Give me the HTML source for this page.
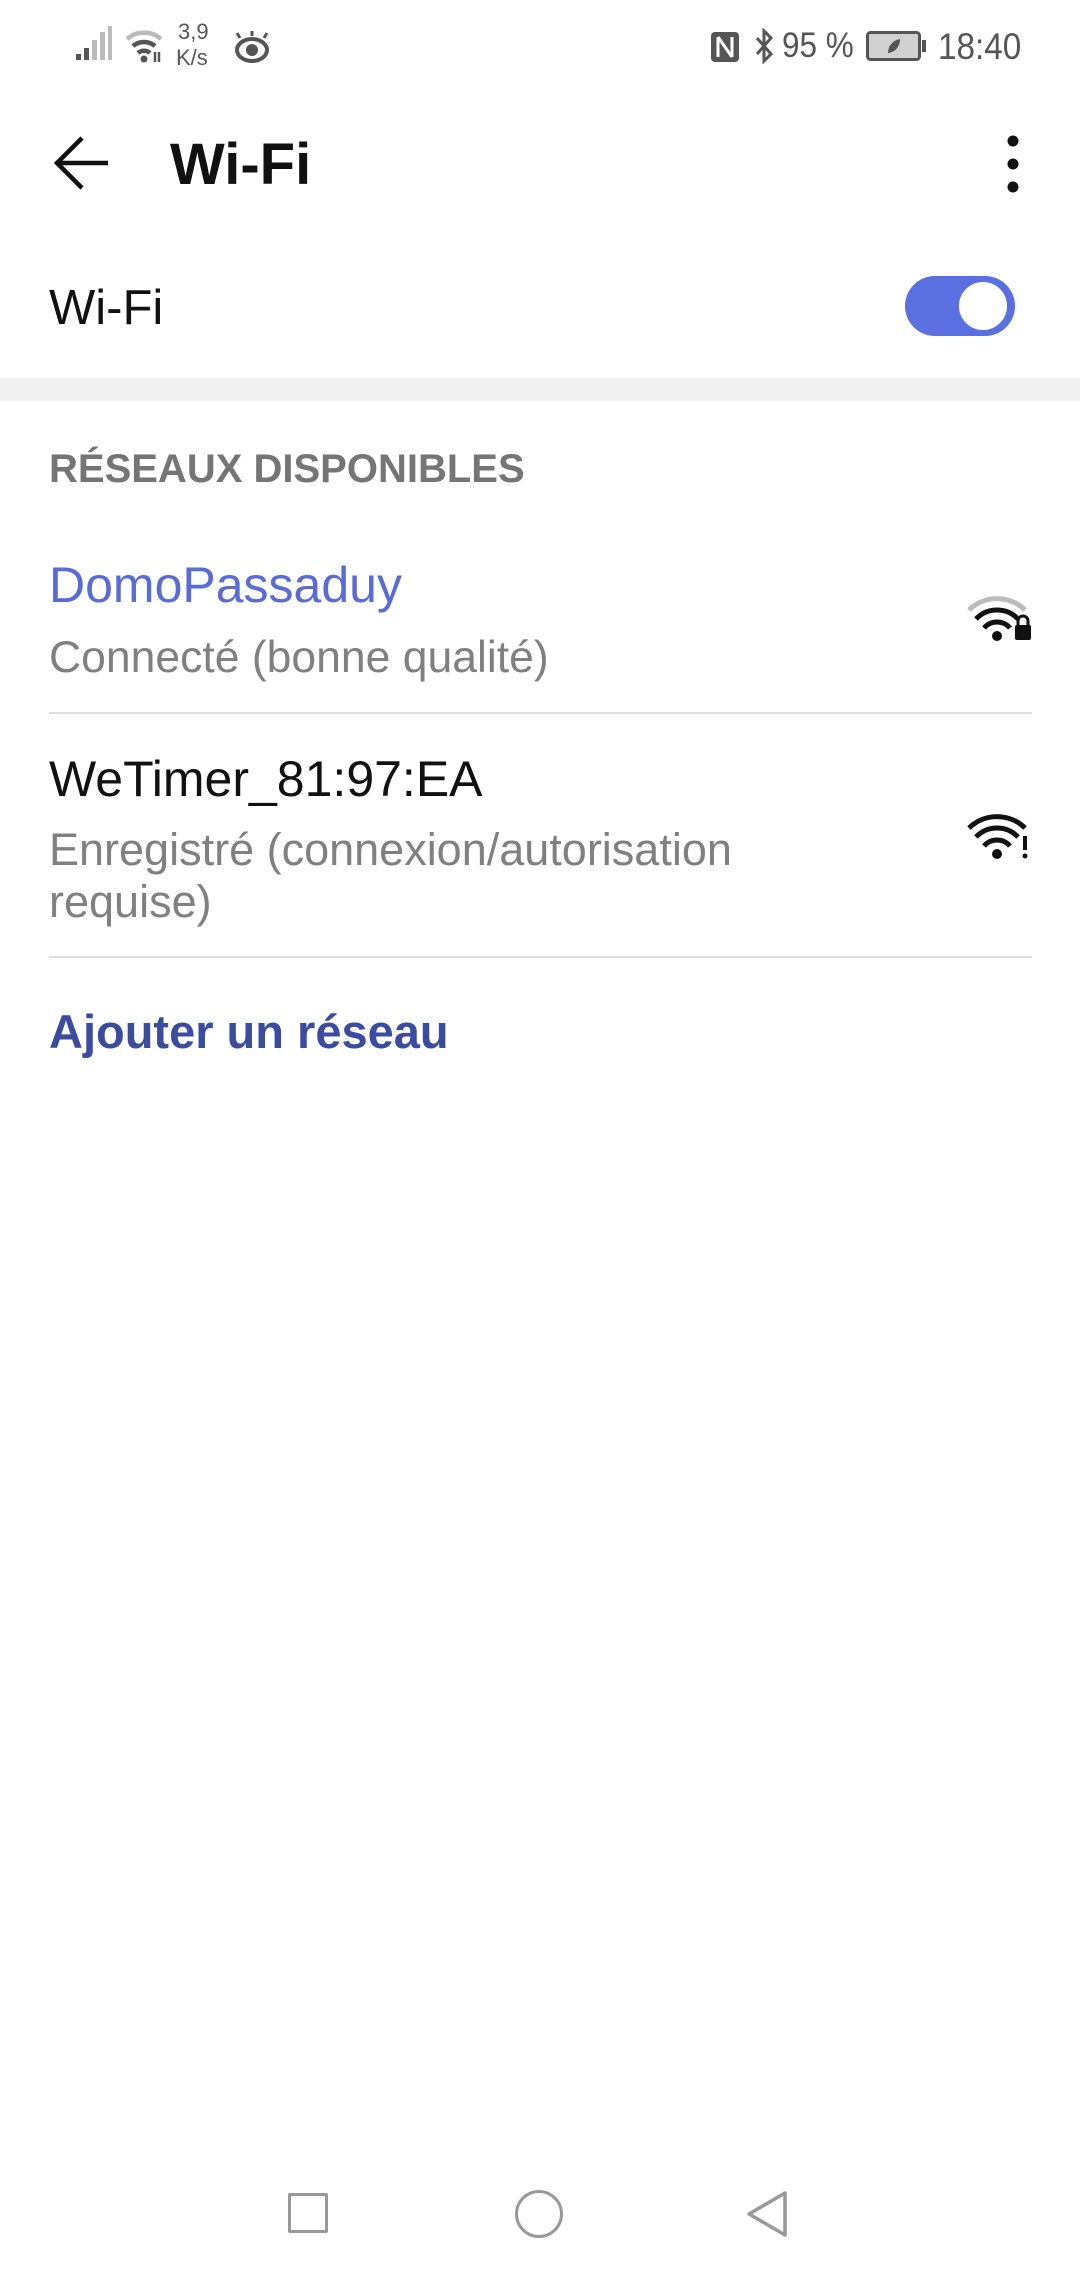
<!DOCTYPE html>
<html><head><meta charset="utf-8"><style>
html,body{margin:0;padding:0}
body{width:1080px;height:2280px;background:#fff;position:relative;overflow:hidden;font-family:"Liberation Sans",sans-serif}
.t{position:absolute;white-space:nowrap;line-height:1;transform-origin:left center}
.a{position:absolute}
</style></head><body>
<!-- status bar -->
<svg class="a" style="left:74px;top:26px" width="40" height="36" viewBox="0 0 40 36">
<rect x="2" y="28" width="5" height="6" fill="#555"/><rect x="10" y="22" width="5" height="12" fill="#555"/><rect x="18" y="14" width="5" height="20" fill="#bbb"/><rect x="26" y="6" width="5" height="28" fill="#bbb"/><rect x="34" y="0" width="4" height="34" fill="#bbb"/></svg>
<svg class="a" style="left:124px;top:28px" width="42" height="36" viewBox="0 0 42 36">
<path d="M3 11 A26 26 0 0 1 37 11" fill="none" stroke="#bbb" stroke-width="4.5"/>
<path d="M9 18 A17 17 0 0 1 31 18" fill="none" stroke="#555" stroke-width="4.5"/>
<path d="M14 25 A9 9 0 0 1 26 25" fill="none" stroke="#555" stroke-width="4.5"/>
<circle cx="20" cy="31" r="3.5" fill="#555"/><path d="M31 24v10M35 24v10" stroke="#555" stroke-width="2.5"/></svg>
<div class="t" style="left:178px;top:21px;font-size:22px;color:#555">3,9</div>
<div class="t" style="left:176px;top:47px;font-size:22px;color:#555">K/s</div>
<svg class="a" style="left:232px;top:30px" width="40" height="34" viewBox="0 0 40 34">
<ellipse cx="20" cy="20" rx="15" ry="11" fill="none" stroke="#555" stroke-width="4"/><circle cx="20" cy="20" r="6" fill="#555"/>
<path d="M8 8l-3-5M20 6V1M32 8l3-5" stroke="#555" stroke-width="3"/></svg>
<svg class="a" style="left:709px;top:30px" width="32" height="34" viewBox="0 0 32 34">
<rect x="2" y="2" width="28" height="30" rx="4" fill="#555"/><path d="M9 7v20M9 7l14 20M23 7v20" stroke="#fff" stroke-width="3" fill="none"/></svg>
<svg class="a" style="left:753px;top:28px" width="24" height="36" viewBox="0 0 24 36">
<path d="M4 10l14 16-7 7V3l7 7L4 26" fill="none" stroke="#555" stroke-width="3"/></svg>
<div class="t" style="left:782px;top:28px;font-size:35px;color:#555;transform:scaleX(.9)">95 %</div>
<svg class="a" style="left:866px;top:31px" width="62" height="30" viewBox="0 0 62 30">
<rect x="1.5" y="1.5" width="52" height="27" rx="3" fill="#d0d0d0" stroke="#555" stroke-width="3"/><rect x="56" y="9" width="4" height="12" fill="#555"/>
<path d="M22 22c0-8 6-13 12-14 0 8-5 13-12 14z" fill="#555"/></svg>
<div class="t" style="left:938px;top:28px;font-size:37px;color:#555;transform:scaleX(.9)">18:40</div>
<!-- toolbar -->
<svg class="a" style="left:54px;top:134px" width="58" height="58" viewBox="0 0 58 58">
<path d="M54 29H4M28 4L3 29l25 25" fill="none" stroke="#111" stroke-width="4.5"/></svg>
<div class="t" style="left:170px;top:136px;font-size:58px;font-weight:bold;color:#111">Wi-Fi</div>
<svg class="a" style="left:1003px;top:134px" width="20" height="60" viewBox="0 0 20 60">
<circle cx="10" cy="7" r="5.5" fill="#111"/><circle cx="10" cy="30" r="5.5" fill="#111"/><circle cx="10" cy="53" r="5.5" fill="#111"/></svg>
<!-- wifi toggle row -->
<div class="t" style="left:49px;top:284px;font-size:49px;color:#111">Wi-Fi</div>
<div class="a" style="left:905px;top:276px;width:110px;height:60px;border-radius:30px;background:#5a6fe0"></div>
<div class="a" style="left:956px;top:279px;width:48px;height:48px;border-radius:50%;background:#fff;border:3px solid #5a6fe0;box-sizing:content-box"></div>
<div class="a" style="left:0;top:378px;width:1080px;height:23px;background:#f1f1f1"></div>
<!-- section -->
<div class="t" style="left:49px;top:449px;font-size:40px;font-weight:bold;color:#757575">RÉSEAUX DISPONIBLES</div>
<div class="t" style="left:49px;top:560px;font-size:50px;color:#5a6ad6">DomoPassaduy</div>
<div class="t" style="left:49px;top:636px;font-size:44.5px;color:#808080">Connecté (bonne qualité)</div>
<svg class="a" style="left:965px;top:592px" width="68" height="50" viewBox="0 0 68 50">
<path d="M4 18A40 40 0 0 1 60 18" fill="none" stroke="#bbb" stroke-width="5"/>
<path d="M11 27A29 29 0 0 1 53 27" fill="none" stroke="#111" stroke-width="5"/>
<path d="M19 36A17 17 0 0 1 45 36" fill="none" stroke="#111" stroke-width="5"/>
<circle cx="32" cy="44" r="5" fill="#111"/>
<rect x="50" y="33" width="16" height="15" rx="2" fill="#111"/><path d="M53 34v-5a5 5 0 0 1 10 0v5" fill="none" stroke="#111" stroke-width="3"/></svg>
<div class="a" style="left:49px;top:712px;width:983px;height:2px;background:#dedede"></div>
<div class="t" style="left:49px;top:754px;font-size:50px;color:#111">WeTimer_81:97:EA</div>
<div class="t" style="left:49px;top:827px;font-size:45px;color:#808080">Enregistré (connexion/autorisation</div>
<div class="t" style="left:49px;top:879px;font-size:45px;color:#808080">requise)</div>
<svg class="a" style="left:965px;top:810px" width="68" height="50" viewBox="0 0 68 50">
<path d="M4 18A40 40 0 0 1 60 18" fill="none" stroke="#111" stroke-width="5"/>
<path d="M11 27A29 29 0 0 1 53 27" fill="none" stroke="#111" stroke-width="5"/>
<path d="M19 36A17 17 0 0 1 45 36" fill="none" stroke="#111" stroke-width="5"/>
<circle cx="32" cy="44" r="5" fill="#111"/>
<path d="M60 26v14" stroke="#111" stroke-width="4"/><circle cx="60" cy="46" r="2.5" fill="#111"/></svg>
<div class="a" style="left:49px;top:956px;width:983px;height:2px;background:#dedede"></div>
<div class="t" style="left:49px;top:1008px;font-size:47px;font-weight:bold;color:#3a4ba0">Ajouter un réseau</div>
<!-- nav bar -->
<div class="a" style="left:288px;top:2193px;width:40px;height:40px;border:3.5px solid #999;box-sizing:border-box;border-radius:2px"></div>
<div class="a" style="left:515px;top:2190px;width:48px;height:48px;border:3.5px solid #999;box-sizing:border-box;border-radius:50%"></div>
<svg class="a" style="left:745px;top:2190px" width="44" height="48" viewBox="0 0 44 48">
<path d="M40 3L4 24l36 21z" fill="none" stroke="#999" stroke-width="3.5" stroke-linejoin="round"/></svg>
</body></html>
